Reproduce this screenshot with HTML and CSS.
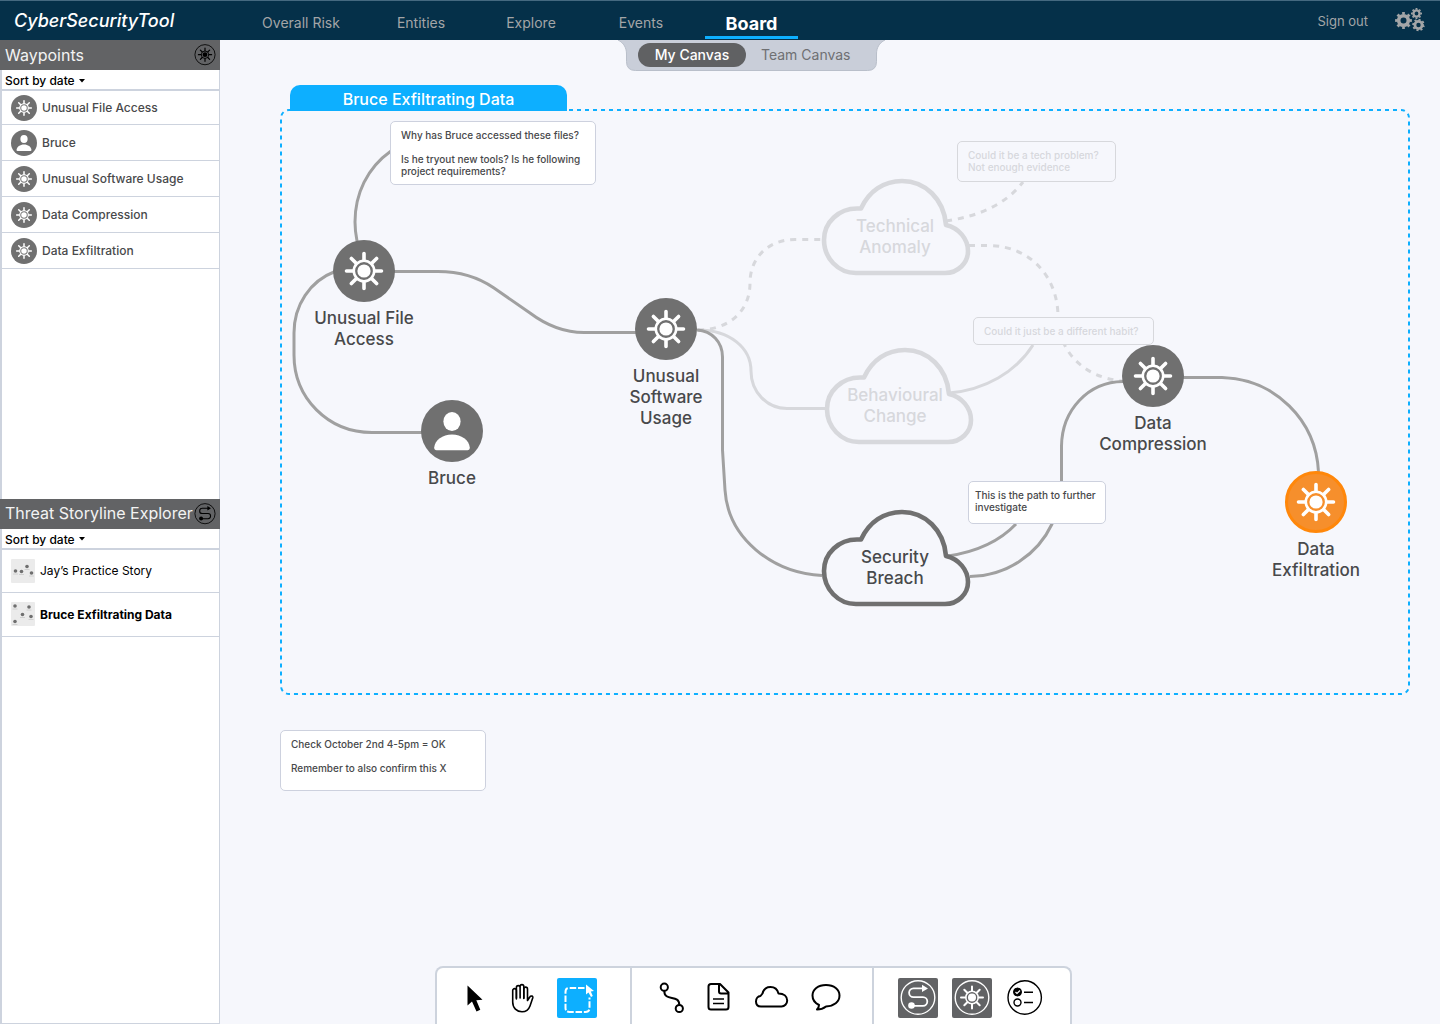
FILE: index.html
```html
<!DOCTYPE html>
<html lang="en">
<head>
    <meta charset="UTF-8">
    <meta name="viewport" content="width=device-width, initial-scale=1.0">
    <title>CyberSecurityTool - Board</title>
    <link rel="stylesheet" href="styles.css">
</head>
<body>

<!-- shared icons -->
<svg class="sprite" aria-hidden="true">
    <symbol id="wheel" viewBox="0 0 62 62">
        <circle cx="31" cy="31" r="6.6" fill="currentColor"/>
        <circle cx="31" cy="31" r="10.2" fill="none" stroke="currentColor" stroke-width="2.6"/>
        <path d="M31 20V13.5M31 42v6.5M20 31h-6.5M42 31h6.5M23.2 23.2l-4.8-4.8M38.8 38.8l4.8 4.8M23.2 38.8l-4.8 4.8M38.8 23.2l4.8-4.8" fill="none" stroke="currentColor" stroke-width="3.6" stroke-linecap="round"/>
    </symbol>
    <symbol id="person" viewBox="0 0 62 62">
        <ellipse cx="31" cy="21.5" rx="8.6" ry="9.5" fill="currentColor"/>
        <path d="M13.2 47.5C14 40 21.5 34.5 31 34.5S48 40 48.8 47.5Q48.8 50.2 46.5 50.2H15.5Q13.2 50.2 13.2 47.5Z" fill="currentColor"/>
    </symbol>
    <symbol id="wheel-ring" viewBox="0 0 40 40">
        <circle cx="20" cy="19.5" r="16.8" fill="none" stroke="currentColor" stroke-width="1.4"/>
        <circle cx="20" cy="19.5" r="4" fill="currentColor"/>
        <circle cx="20" cy="19.5" r="6.2" fill="none" stroke="currentColor" stroke-width="1.5"/>
        <path d="M20 13V8.5M20 26v4.5M13.5 19.5H9M26.5 19.5H31M15.3 14.8l-3-3M24.7 24.2l3 3M15.3 24.2l-3 3M24.7 14.8l3-3" fill="none" stroke="currentColor" stroke-width="2" stroke-linecap="round"/>
    </symbol>
    <symbol id="storyline" viewBox="0 0 40 40">
        <circle cx="20" cy="19.5" r="16.8" fill="none" stroke="currentColor" stroke-width="1.4"/>
        <circle cx="13.5" cy="27.5" r="3.3" fill="currentColor"/>
        <path d="M13.5 27.8H25a4.3 4.3 0 0 0 0-8.600H15.5a4.4 4.4 0 0 1 0-8.800H25" fill="none" stroke="currentColor" stroke-width="1.8"/>
        <path d="M24 6.8L30 10.4L24 14Z" fill="currentColor"/>
    </symbol>
    <symbol id="cloud-shape" viewBox="0 0 150 98">
        <path d="M40 30.5C48 13 63 3 81 3C104 3 123 21 125 47C138 50 147 61 147 73C147 85 137 95 124 95H35C17 95 3 80 3 62C3 44 18 30.5 36 30.5Z" fill="none" stroke="currentColor" stroke-width="4.6" stroke-linejoin="round"/>
    </symbol>
    <symbol id="caret" viewBox="0 0 6 4">
        <path d="M0 0H6L3 3.5Z" fill="currentColor"/>
    </symbol>
</svg>

<header class="topbar">
    <a class="brand" href="#">CyberSecurityTool</a>
    <nav class="nav">
        <a class="nav-link nav-first" href="#">Overall Risk</a>
        <a class="nav-link" href="#">Entities</a>
        <a class="nav-link" href="#">Explore</a>
        <a class="nav-link" href="#">Events</a>
        <a class="nav-link active" href="#" aria-current="page">Board</a>
    </nav>
    <a class="sign-out" href="#">Sign out</a>
    <button class="settings" type="button" aria-label="Settings">
        <svg width="30" height="24" viewBox="0 0 30 24" fill="none" stroke="currentColor">
            <circle cx="8.5" cy="12.5" r="4.8" stroke-width="3.6"/>
            <circle cx="8.5" cy="12.5" r="7.2" stroke-width="2.4" pathLength="16" stroke-dasharray="1 1" stroke-dashoffset="0.5"/>
            <circle cx="21.5" cy="5.5" r="3.1" stroke-width="2.4"/>
            <circle cx="21.5" cy="5.5" r="4.7" stroke-width="1.6" pathLength="16" stroke-dasharray="1 1" stroke-dashoffset="0.5"/>
            <circle cx="23.5" cy="17" r="3.6" stroke-width="2.8"/>
            <circle cx="23.5" cy="17" r="5.4" stroke-width="1.8" pathLength="16" stroke-dasharray="1 1"/>
        </svg>
    </button>
</header>

<div class="layout">
    <aside class="sidebar">
        <section class="panel">
            <div class="panel-head">
                <h2>Waypoints</h2>
                <svg class="panel-icon" width="24" height="24"><use href="#wheel-ring"/></svg>
            </div>
            <div class="sort">
                <select aria-label="Sort waypoints">
                    <option>Sort by date</option>
                    <option>Sort by risk</option>
                </select>
                <svg width="6" height="4"><use href="#caret"/></svg>
            </div>
            <ul class="list">
                <li><a href="#"><svg class="dot" width="26" height="26"><use href="#wheel"/></svg>Unusual File Access</a></li>
                <li><a href="#"><svg class="dot" width="26" height="26"><use href="#person"/></svg>Bruce</a></li>
                <li><a href="#"><svg class="dot" width="26" height="26"><use href="#wheel"/></svg>Unusual Software Usage</a></li>
                <li><a href="#"><svg class="dot" width="26" height="26"><use href="#wheel"/></svg>Data Compression</a></li>
                <li><a href="#"><svg class="dot" width="26" height="26"><use href="#wheel"/></svg>Data Exfiltration</a></li>
            </ul>
        </section>

        <section class="panel">
            <div class="panel-head">
                <h2>Threat Storyline Explorer</h2>
                <svg class="panel-icon" width="24" height="24"><use href="#storyline"/></svg>
            </div>
            <div class="sort">
                <select aria-label="Sort storylines">
                    <option>Sort by date</option>
                    <option>Sort by risk</option>
                </select>
                <svg width="6" height="4"><use href="#caret"/></svg>
            </div>
            <ul class="list stories">
                <li><a href="#">
                    <svg width="24" height="24" viewBox="0 0 24 24">
                        <rect width="24" height="24" rx="1" fill="#ebebeb"/>
                        <g fill="#6f6f6f"><circle cx="4.5" cy="12" r="1.8"/><circle cx="10.5" cy="12.5" r="1.8"/><circle cx="16" cy="7.5" r="1.8"/><circle cx="20.5" cy="14" r="1.8"/></g>
                        <path d="M2 15h5M8 15.5h5M13.5 10.5h5M18 17h5" stroke="#d0d0d0"/>
                    </svg>Jay’s Practice Story</a></li>
                <li class="current"><a href="#">
                    <svg width="24" height="24" viewBox="0 0 24 24">
                        <rect width="24" height="24" rx="1" fill="#ebebeb"/>
                        <g fill="#6f6f6f"><circle cx="4" cy="4" r="1.8"/><circle cx="18" cy="5" r="1.8"/><circle cx="11.5" cy="12.5" r="1.8"/><circle cx="20" cy="14.5" r="1.8"/><circle cx="4" cy="19.5" r="1.8"/></g>
                        <path d="M1.5 7h5M15.5 8h5M9 15.5h5M17.5 17.5h5M1.5 22.5h5" stroke="#d0d0d0"/>
                    </svg>Bruce Exfiltrating Data</a></li>
            </ul>
        </section>
    </aside>

    <main class="workspace">
        <div class="canvas-tabs">
            <svg class="canvas-tabs-bg" width="267" height="31" viewBox="0 0 267 31">
                <path d="M0 0C6 3 8.5 8 8.5 14V21.5Q8.5 30.5 17.5 30.5H249.5Q258.5 30.5 258.5 21.5V14C258.5 8 261 3 267 0" fill="#c9ced9" stroke="#b9bfca"/>
            </svg>
            <button class="canvas-tab selected" type="button">My Canvas</button>
            <button class="canvas-tab" type="button">Team Canvas</button>
        </div>

        <div class="board">
            <div class="story-frame">
                <svg class="story-outline"><rect width="100%" height="100%" rx="8"/></svg>
                <h1 class="story-title">Bruce Exfiltrating Data</h1>
            </div>

            <svg class="links" width="1220" height="740" viewBox="220 71 1220 740">
                <g class="faded">
                    <path class="dashed" d="M698 330C728 330 750 312 750 283C750 258 768 239.5 795 239.5H822"/>
                    <path d="M698 330C730 330 751 348 751 371C751 392 767 408.5 787 408.5H826"/>
                    <path class="dashed" d="M946 221C980 216 1006 204 1023 182"/>
                    <path class="dashed" d="M969 245.5H990C1033 247 1058 279 1058 317C1058 350 1083 378 1123 381"/>
                    <path d="M949 393C985 390 1016 372 1033 345"/>
                </g>
                <g>
                    <path d="M391 151C367 168 355 194 355 222C355 229 356 236 357 241"/>
                    <path d="M335 271.5C310 281 294 305 294 333V355C294 398 328 432.5 372 432.5H422"/>
                    <path d="M394 271.5H438C460 271.5 478 277 494 288L530 313C546 325 563 332.5 584 332.5H637"/>
                    <path d="M697 330C712 331 722.5 342 722.5 357V450L725 490C728 538 772 573 822 575.5"/>
                    <path d="M948 556C975 552 998 543 1016 524"/>
                    <path d="M970 576.5C1007 576 1038 554 1052 524L1061.5 500V446C1062 410 1088 382 1123 381.5"/>
                    <path d="M1183 377.5H1222C1275 379 1316 420 1318.5 472"/>
                </g>
                <use class="cloud cloud-faded" href="#cloud-shape" x="821" y="178" width="150" height="98"/>
                <use class="cloud cloud-faded" href="#cloud-shape" x="824" y="347" width="150" height="98"/>
                <use class="cloud" href="#cloud-shape" x="821" y="509" width="150" height="98"/>
            </svg>

            <div class="cloud-label technical">Technical Anomaly</div>
            <div class="cloud-label behavioural">Behavioural Change</div>
            <div class="cloud-label breach">Security Breach</div>

            <div class="node node-file">
                <svg class="dot" width="62" height="62"><use href="#wheel"/></svg>
                <span>Unusual File Access</span>
            </div>
            <div class="node node-bruce">
                <svg class="dot" width="62" height="62"><use href="#person"/></svg>
                <span>Bruce</span>
            </div>
            <div class="node node-software">
                <svg class="dot" width="62" height="62"><use href="#wheel"/></svg>
                <span>Unusual Software Usage</span>
            </div>

            <div class="note note-files">
                <p>Why has Bruce accessed these files?</p>
                <p>Is he tryout new tools? Is he following project requirements?</p>
            </div>
            <div class="note note-tech faded-note">
                <p>Could it be a tech problem?<br>Not enough evidence</p>
            </div>
            <div class="note note-habit faded-note">
                <p>Could it just be a different habit?</p>
            </div>
            <div class="note note-path">
                <p>This is the path to further investigate</p>
            </div>
            <div class="note note-check">
                <p>Check October 2nd 4-5pm = OK</p>
                <p>Remember to also confirm this X</p>
            </div>

            <div class="node node-compression">
                <svg class="dot" width="62" height="62"><use href="#wheel"/></svg>
                <span>Data Compression</span>
            </div>
            <div class="node node-exfiltration">
                <svg class="dot alert" width="62" height="62" viewBox="3 3 56 56"><use href="#wheel" width="62" height="62"/></svg>
                <span>Data Exfiltration</span>
            </div>
        </div>

        <div class="toolbar" role="toolbar" aria-label="Board tools">
            <div class="tool-group tools-select">
                <button class="tool" type="button" aria-label="Pointer">
                    <svg width="40" height="40" viewBox="0 0 40 40"><path d="M18.5 7.5V27.5L23 23.5L27.5 33.5L31.3 31.8L27.3 22.3L33.5 21.8Z" fill="currentColor"/></svg>
                </button>
                <button class="tool" type="button" aria-label="Pan">
                    <svg width="40" height="40" viewBox="0 0 40 40" fill="none" stroke="currentColor" stroke-width="1.6" stroke-linecap="round" stroke-linejoin="round">
                        <path d="M13.4 21V12.5a1.85 1.85 0 0 0-3.7 0V24c0 6 4 9.8 9.3 9.8c4.2 0 6.7-2.2 8-5.8l2.8-8.200c.5-1.7-2-2.5-3-.8L24.5 22.5V11a1.85 1.85 0 0 0-3.7 0V20.5"/>
                        <path d="M13.4 20V9.5a1.85 1.85 0 0 1 3.7 0V20M17.1 20V8.500a1.85 1.85 0 0 1 3.7 0V20"/>
                    </svg>
                </button>
                <button class="tool on" type="button" aria-label="Select area">
                    <svg width="40" height="40" viewBox="0 0 40 40">
                        <path d="M27.500 10H12Q8.500 10 8.500 14V30Q8.500 34 12.500 34H28.500Q32.500 34 32.500 30V19.500" fill="none" stroke="currentColor" stroke-width="2" stroke-dasharray="6.5 1.8"/>
                        <path d="M29 6.5V16.5L31.5 14.5L34 19L35.8 18L33.8 13.5L37 13Z" fill="currentColor"/>
                    </svg>
                </button>
            </div>
            <div class="tool-group tools-draw">
                <button class="tool" type="button" aria-label="Connector">
                    <svg width="40" height="40" viewBox="0 0 40 40" fill="none" stroke="currentColor" stroke-width="2">
                        <circle cx="20.3" cy="9.2" r="3.6"/><circle cx="35.3" cy="30.5" r="3.6"/>
                        <path d="M20.3 13C20.3 24 35.3 16 35.3 26.8"/>
                    </svg>
                </button>
                <button class="tool" type="button" aria-label="Document">
                    <svg width="40" height="40" viewBox="0 0 40 40" fill="none" stroke="currentColor" stroke-width="2" stroke-linejoin="round">
                        <path d="M13 6H22L30.5 14.5V29a2.5 2.5 0 0 1-2.5 2.5H13a2.5 2.5 0 0 1-2.5-2.5V8.5A2.5 2.5 0 0 1 13 6ZM21 6V13.5a2 2 0 0 0 2 2H30.5"/>
                        <path d="M15 21H26M15 25.5H26" stroke-width="1.5"/>
                    </svg>
                </button>
                <button class="tool" type="button" aria-label="Hypothesis">
                    <svg width="40" height="40" viewBox="0 0 40 40" fill="none" stroke="currentColor" stroke-width="2" stroke-linejoin="round">
                        <path d="M10.5 15.5C11.5 11.5 14.5 9 18.5 9C22.5 9 25.5 11.5 26.5 15.5C32 15.5 35.2 18.5 35.2 22.5C35.2 26 32.5 28.5 29.5 28.5H9C6 28.5 4 26.5 4 23.5C4 20.5 6 18.2 8.5 18Z"/>
                    </svg>
                </button>
                <button class="tool" type="button" aria-label="Comment">
                    <svg width="40" height="40" viewBox="0 0 40 40" fill="none" stroke="currentColor" stroke-width="2" stroke-linejoin="round">
                        <path d="M20 7C28 7 33.5 11.5 33.5 17.5C33.5 24 28 28 20 28.5C17.5 30.5 14 31.5 11 31.5C12 30.5 13 28.5 13 27C9 25 6.5 22 6.5 17.5C6.5 11.5 12 7 20 7Z"/>
                    </svg>
                </button>
            </div>
            <div class="tool-group tools-story">
                <button class="tool dark" type="button" aria-label="Storylines"><svg width="40" height="40"><use href="#storyline"/></svg></button>
                <button class="tool dark" type="button" aria-label="Waypoints"><svg width="40" height="40"><use href="#wheel-ring"/></svg></button>
                <button class="tool" type="button" aria-label="Checklist">
                    <svg width="40" height="40" viewBox="0 0 40 40" fill="none" stroke="currentColor">
                        <circle cx="18.7" cy="19.5" r="16.7" stroke-width="1.4"/>
                        <circle cx="11.5" cy="14" r="4" fill="currentColor"/>
                        <path d="M9.5 14l1.5 1.5l3-3" stroke="#fff" stroke-width="1.2"/>
                        <circle cx="11.5" cy="24.5" r="3.5" stroke-width="1.4"/>
                        <path d="M18 14.2H27M18 24.5H27" stroke-width="1.6"/>
                    </svg>
                </button>
            </div>
        </div>
    </main>
</div>

</body>
</html>
```

FILE: styles.css
```css
* {
    box-sizing: border-box;
}
body {
    display: flex;
    flex-direction: column;
    min-height: 100vh;
    margin: 0;
    font-family: Inter, "Liberation Sans", sans-serif;
    font-size: 12px;
    color: #48494b;
    background-color: #f6f7fc;
}
h1, h2, p, ul {
    margin: 0;
    padding: 0;
}
ul {
    list-style: none;
}
a {
    color: inherit;
    text-decoration: none;
}
button, select {
    font: inherit;
    color: inherit;
    border: none;
    background: none;
    padding: 0;
    cursor: pointer;
}
svg {
    display: block;
    flex-shrink: 0;
}
.sprite {
    position: absolute;
    width: 0;
    height: 0;
}

/* top bar */
.topbar {
    display: flex;
    align-items: stretch;
    height: 40px;
    padding-right: 15px;
    background-color: #053049;
    border-top: 1px solid #456980;
    color: #a3a5a7;
    font-size: 14px;
    line-height: 43px;
}
.brand {
    width: 236px;
    padding-left: 14px;
    font-size: 18px;
    font-style: italic;
    font-weight: 500;
    line-height: 40px;
    color: #fff;
}
.nav {
    display: flex;
}
.nav-link {
    width: 110px;
    text-align: center;
}
.nav-first {
    width: 130px;
}
.nav-link.active {
    width: 93px;
    height: 38px;
    margin-left: 9px;
    border-bottom: 3px solid #0dafff;
    color: #fff;
    font-size: 18px;
    font-weight: 700;
    line-height: 46px;
}
.sign-out {
    margin-left: auto;
    font-size: 13px;
    line-height: 40px;
}
.settings {
    margin-left: 27px;
    padding-bottom: 2px;
}

/* sidebar */
.layout {
    display: flex;
    flex: 1;
}
.sidebar {
    display: grid;
    grid-template-rows: 7fr 8fr;
    width: 220px;
    background-color: #fff;
    border: solid #cdd3de;
    border-width: 0 1px 1px 2px;
}
.panel-head {
    display: flex;
    align-items: center;
    justify-content: space-between;
    height: 30px;
    margin: 0 -1px 0 -2px;
    padding: 0 3px 0 5px;
    background-color: #626365;
}
.panel-head h2 {
    font-size: 16px;
    font-weight: 400;
    line-height: 20px;
    padding-bottom: 1px;
    color: #f3f3f3;
}
.panel-icon {
    color: #000;
}
.sort {
    display: flex;
    align-items: center;
    gap: 4px;
    height: 21px;
    padding-top: 2px;
    padding-left: 3px;
    border-bottom: 2px solid #cdd3de;
    font-weight: 500;
    color: #000;
}
.sort select {
    appearance: none;
}
.list a {
    display: flex;
    align-items: center;
    gap: 5px;
    height: 36px;
    padding-left: 9px;
    border-bottom: 1px solid #cdd3de;
    font-weight: 500;
}
.list li:first-child a {
    height: 34px;
}
.list.stories a {
    height: 44px;
    font-weight: 400;
    color: #000;
}
.list.stories li:first-child a {
    height: 43px;
}
.list.stories .current a {
    font-weight: 700;
}
.dot {
    border-radius: 50%;
    background-color: #707070;
    color: #fff;
}
.dot.alert {
    background-color: #f68f2c;
    border: 3px solid #ff870a;
}

/* workspace */
.workspace {
    display: flex;
    flex-direction: column;
    flex: 1;
    min-width: 0;
}
.canvas-tabs {
    position: relative;
    display: flex;
    align-items: flex-start;
    align-self: flex-start;
    gap: 15px;
    width: 267px;
    height: 31px;
    margin-left: 398px;
    padding: 3px 0 0 20px;
}
.canvas-tabs-bg {
    position: absolute;
    top: 0;
    left: 0;
}
.canvas-tab {
    position: relative;
    height: 24px;
    padding-bottom: 2px;
    font-size: 14px;
    color: #6f7073;
}
.canvas-tab.selected {
    width: 108px;
    border-radius: 12px;
    background-color: #606163;
    color: #fff;
    font-weight: 500;
}

/* board: free canvas, everything on it is placed by hand */
.board {
    position: relative;
    flex: 1;
    min-height: 740px;
    overflow: hidden;
}
.story-frame {
    position: absolute;
    top: 39px;
    left: 61px;
    right: 31px;
    height: 584px;
}
.story-outline {
    width: 100%;
    height: 100%;
    overflow: visible;
}
.story-outline rect {
    fill: none;
    stroke: #0dafff;
    stroke-width: 2;
    stroke-dasharray: 4 4;
}
.story-title {
    position: absolute;
    left: 9px;
    bottom: 100%;
    width: 277px;
    height: 26px;
    margin-bottom: -1px;
    padding-top: 1px;
    border-radius: 10px 10px 0 0;
    background-color: #0dafff;
    color: #fff;
    font-size: 16px;
    font-weight: 500;
    line-height: 26px;
    text-align: center;
}
.links {
    position: absolute;
    top: 0;
    left: 0;
    fill: none;
    stroke: #a0a0a0;
    stroke-width: 3;
}
.links .faded {
    stroke: #d7d8dc;
}
.dashed {
    stroke-dasharray: 6 6;
}
.cloud {
    color: #707070;
}
.cloud-faded {
    color: #d7d8dc;
}
.node,
.cloud-label {
    position: absolute;
    font-size: 17px;
    font-weight: 500;
    line-height: 21px;
    text-align: center;
}
.node {
    display: flex;
    flex-direction: column;
    align-items: center;
    gap: 6px;
    width: 112px;
}
.cloud-label {
    left: 619px;
    width: 112px;
}
.node-file { left: 88px; top: 169px; }
.node-bruce { left: 176px; top: 329px; }
.node-software { left: 390px; top: 227px; }
.node-compression { left: 877px; top: 274px; }
.node-exfiltration { left: 1040px; top: 400px; }
.technical { top: 145px; color: #d7d8dc; }
.behavioural { top: 314px; color: #d7d8dc; }
.breach { top: 476px; }

.note {
    position: absolute;
    padding: 7px 10px;
    border: 1px solid #cdd1de;
    border-radius: 5px;
    background-color: #fff;
    font-size: 10px;
    font-weight: 500;
    line-height: 12px;
}
.note p + p {
    margin-top: 12px;
}
.faded-note {
    border-color: #d7d8dc;
    background-color: #f6f7fc;
    color: #d7d8dc;
}
.note-files { left: 170px; top: 50px; width: 206px; }
.note-tech { left: 737px; top: 70px; width: 159px; min-height: 41px; }
.note-habit { left: 753px; top: 246px; width: 181px; }
.note-path { left: 748px; top: 410px; width: 138px; min-height: 43px; padding-left: 6px; padding-right: 6px; }
.note-check { left: 60px; top: 659px; width: 206px; min-height: 61px; }

/* toolbar */
.toolbar {
    display: flex;
    align-self: flex-start;
    margin-left: 215px;
    border: 2px solid #cdd3dd;
    border-bottom: none;
    border-radius: 8px 8px 0 0;
    background-color: #fff;
}
.tool-group {
    display: flex;
    gap: 14px;
    padding-top: 10px;
    padding-bottom: 6px;
}
.tool-group + .tool-group {
    border-left: 2px solid #cdd3dd;
}
.tools-select {
    padding-left: 12px;
    padding-right: 33px;
}
.tools-draw {
    padding-left: 12px;
    padding-right: 26px;
}
.tools-story {
    padding-left: 24px;
    padding-right: 24px;
}
.tool {
    width: 40px;
    height: 40px;
    border-radius: 2px;
    color: #000;
}
.tool.on {
    background-color: #0dafff;
    color: #fff;
}
.tool.dark {
    background-color: #626365;
    color: #fff;
}
```
